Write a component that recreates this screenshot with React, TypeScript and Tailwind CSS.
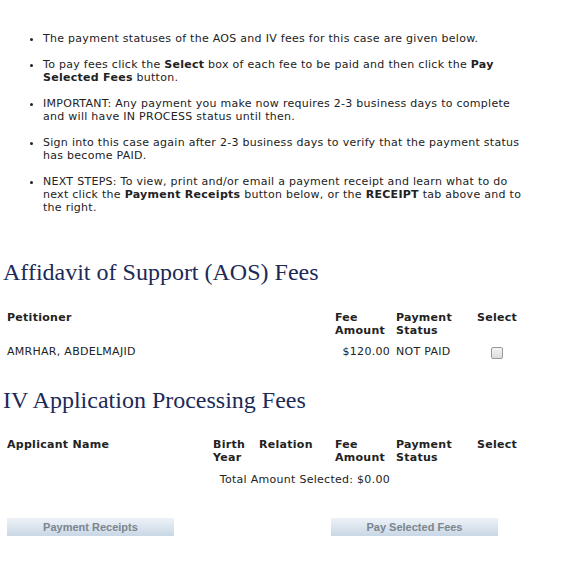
const body = "font-['DejaVu_Sans',Verdana,sans-serif] text-[11px] leading-[13px] tracking-[0.28px] text-[#222]";

function Heading({ children }: { children: React.ReactNode }) {
  return (
    <h2 className="pl-[3px] font-['Liberation_Serif','Times_New_Roman',serif] text-[24px] leading-[28px] tracking-normal text-[#1c2a58]">
      {children}
    </h2>
  );
}

function FeeButton({ label }: { label: string }) {
  return (
    <button className="h-[18px] w-[167px] bg-gradient-to-b from-[#eef2f7] to-[#c8d7e5] font-['Liberation_Sans',Arial,sans-serif] text-[11px] font-bold tracking-normal text-[#7b858f]">
      {label}
    </button>
  );
}

export default function App() {
  return (
    <div className={`${body} min-h-[569px] w-[580px] bg-white`}>
      <ul className="w-[525px] list-disc space-y-[13px] pl-[43px] pt-[32px]">
        <li>The payment statuses of the AOS and IV fees for this case are given below.</li>
        <li>
          To pay fees click the <b>Select</b> box of each fee to be paid and then click the <b>Pay Selected Fees</b> button.
        </li>
        <li>
          IMPORTANT: Any payment you make now requires 2-3 business days to complete and will have IN PROCESS status until then.
        </li>
        <li>Sign into this case again after 2-3 business days to verify that the payment status has become PAID.</li>
        <li>
          NEXT STEPS: To view, print and/or email a payment receipt and learn what to do next click the <b>Payment Receipts</b> button below, or the <b>RECEIPT</b> tab above and to the right.
        </li>
      </ul>

      <div className="mt-[44px]">
        <Heading>Affidavit of Support (AOS) Fees</Heading>
      </div>

      {/* AOS table */}
      <div className="mt-[25px] grid grid-cols-[328px_61px_81px_50px] pl-[7px]">
        <div className="font-bold">Petitioner</div>
        <div className="font-bold">Fee<br />Amount</div>
        <div className="font-bold">Payment<br />Status</div>
        <div className="font-bold">Select</div>
        <div className="mt-[8px]">AMRHAR, ABDELMAJID</div>
        <div className="mt-[8px] pr-[6px] text-right">$120.00</div>
        <div className="mt-[8px]">NOT PAID</div>
        <div className="mt-[8px] flex pl-[14px]">
          <input type="checkbox" className="mt-[2px] h-[12px] w-[12px] appearance-none rounded-[2px] border border-[#9a9a9a] bg-gradient-to-b from-[#f4f4f4] to-[#dcdcdc]" />
        </div>
      </div>

      <div className="mt-[27px]">
        <Heading>IV Application Processing Fees</Heading>
      </div>

      {/* IV table */}
      <div className="mt-[24px] grid grid-cols-[206px_46px_76px_61px_81px_50px] pl-[7px]">
        <div className="font-bold">Applicant Name</div>
        <div className="font-bold">Birth<br />Year</div>
        <div className="font-bold">Relation</div>
        <div className="font-bold">Fee<br />Amount</div>
        <div className="font-bold">Payment<br />Status</div>
        <div className="font-bold">Select</div>
        <div className="col-span-4 mt-[9px] pr-[6px] text-right">Total Amount Selected: $0.00</div>
      </div>

      <div className="mt-[32px] flex gap-[157px] pl-[7px]">
        <FeeButton label="Payment Receipts" />
        <FeeButton label="Pay Selected Fees" />
      </div>
    </div>
  );
}
